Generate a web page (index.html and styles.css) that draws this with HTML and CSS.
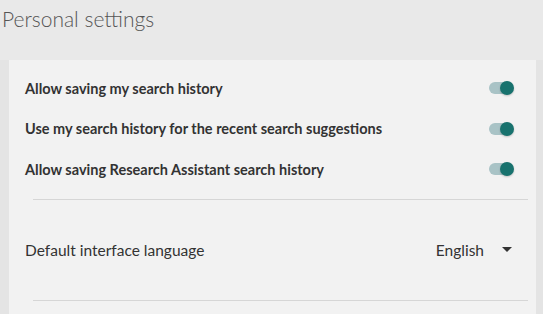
FILE: index.html
```html
<!DOCTYPE html>
<html lang="en">
<head>
<meta charset="utf-8">
<title>Personal settings</title>
<link rel="stylesheet" href="styles.css">
</head>
<body>
<h1 class="page-title">Personal settings</h1>
<section class="panel">
  <div class="card">
    <div class="toggle-row">
      <span class="toggle-label">Allow saving my search history</span>
      <span class="switch" role="switch" aria-checked="true"><span class="track"></span><span class="knob"></span></span>
    </div>
    <div class="toggle-row">
      <span class="toggle-label">Use my search history for the recent search suggestions</span>
      <span class="switch" role="switch" aria-checked="true"><span class="track"></span><span class="knob"></span></span>
    </div>
    <div class="toggle-row">
      <span class="toggle-label">Allow saving Research Assistant search history</span>
      <span class="switch" role="switch" aria-checked="true"><span class="track"></span><span class="knob"></span></span>
    </div>
    <hr class="divider divider-top">
    <div class="select-row">
      <span class="select-label">Default interface language</span>
      <span class="select">
        <span class="select-value">English</span>
        <svg class="caret" width="10" height="5" viewBox="0 0 10 5" aria-hidden="true"><path d="M0 0H10L5 5Z" fill="#333"/></svg>
      </span>
    </div>
    <hr class="divider">
  </div>
</section>
</body>
</html>
```
FILE: styles.css
```css
html, body {
  margin: 0;
  padding: 0;
}
body {
  background: #e9e9e9;
  font-family: "Lato", "Liberation Sans", sans-serif;
  color: #333;
  width: 543px;
  height: 314px;
  overflow: hidden;
}
.page-title {
  margin: 0;
  padding: 5px 0 0 2px;
  height: 60px;
  box-sizing: border-box;
  font-size: 21px;
  font-weight: 300;
  color: #555;
  line-height: 28px;
}
.panel {
  background: #e4e4e4;
  padding: 0 7px 0 9px;
  height: 254px;
}
.card {
  background: #f2f2f2;
  height: 100%;
  padding: 8px 22px 0 16px;
  box-sizing: border-box;
}
.toggle-row {
  display: flex;
  align-items: center;
  justify-content: space-between;
  height: 40.5px;
}
.toggle-label {
  font-size: 14.5px;
  font-weight: 700;
  color: #333;
}
.switch {
  position: relative;
  width: 25px;
  height: 14px;
  display: inline-block;
}
.track {
  position: absolute;
  left: 0;
  top: 1px;
  width: 24px;
  height: 12px;
  border-radius: 6px;
  background: #a9c3c6;
}
.knob {
  position: absolute;
  right: 0;
  top: 0;
  width: 14px;
  height: 14px;
  border-radius: 50%;
  background: #18726e;
  box-shadow: 0 1px 2px rgba(0,0,0,0.2);
}
.divider {
  border: 0;
  border-top: 1px solid #d6d6d6;
  margin: 0 -14px 0 8px;
  height: 0;
}
.divider-top {
  margin-top: 9px;
}
.select-row {
  display: flex;
  align-items: center;
  justify-content: space-between;
  height: 100px;
}
.select-label {
  font-size: 15.5px;
  color: #333;
}
.select {
  display: flex;
  align-items: center;
  gap: 18px;
  padding-right: 2px;
}
.select-value {
  font-size: 15.5px;
  color: #333;
}
.caret {
  display: block;
}
```
